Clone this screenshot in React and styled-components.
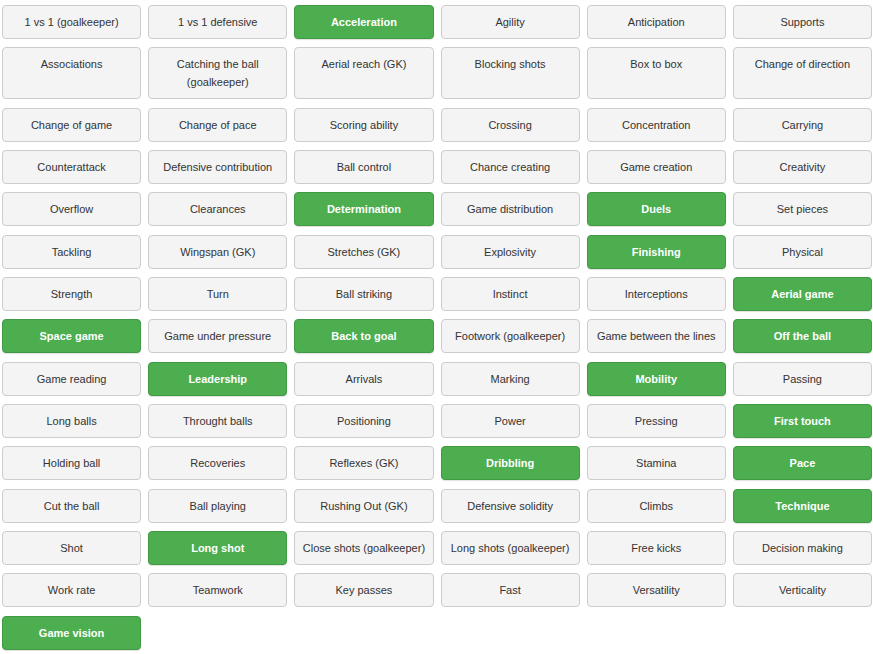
import styled, { createGlobalStyle } from "styled-components";

const GlobalStyle = createGlobalStyle`
  body {
    margin: 0;
    background: #fff;
    font-family: "Liberation Sans", Arial, sans-serif;
  }
`;

const Grid = styled.div`
  display: grid;
  grid-template-columns: repeat(6, 1fr);
  column-gap: 7px;
  row-gap: 8.33px;
  padding: 5px 1px 4px 2px;
  align-items: stretch;
`;

const Tag = styled.button`
  font-family: "Liberation Sans", Arial, sans-serif;
  font-size: 11px;
  line-height: 18px;
  padding: 7px 6px;
  border-radius: 4px;
  text-align: center;
  display: flex;
  justify-content: center;
  align-items: flex-start;
  cursor: pointer;
  border: 1px solid ${({ active }) => (active ? "#3f9a42" : "#cccccc")};
  background: ${({ active }) => (active ? "#4cae4f" : "#f4f4f4")};
  color: ${({ active }) => (active ? "#ffffff" : "#333333")};
  font-weight: ${({ active }) => (active ? "bold" : "normal")};
  box-shadow: ${({ active }) =>
    active ? "0 1px 1px rgba(0,0,0,0.12)" : "none"};
`;

const skills = [
  ["1 vs 1 (goalkeeper)"], ["1 vs 1 defensive"], ["Acceleration", 1], ["Agility"], ["Anticipation"], ["Supports"],
  ["Associations"], ["Catching the ball (goalkeeper)"], ["Aerial reach (GK)"], ["Blocking shots"], ["Box to box"], ["Change of direction"],
  ["Change of game"], ["Change of pace"], ["Scoring ability"], ["Crossing"], ["Concentration"], ["Carrying"],
  ["Counterattack"], ["Defensive contribution"], ["Ball control"], ["Chance creating"], ["Game creation"], ["Creativity"],
  ["Overflow"], ["Clearances"], ["Determination", 1], ["Game distribution"], ["Duels", 1], ["Set pieces"],
  ["Tackling"], ["Wingspan (GK)"], ["Stretches (GK)"], ["Explosivity"], ["Finishing", 1], ["Physical"],
  ["Strength"], ["Turn"], ["Ball striking"], ["Instinct"], ["Interceptions"], ["Aerial game", 1],
  ["Space game", 1], ["Game under pressure"], ["Back to goal", 1], ["Footwork (goalkeeper)"], ["Game between the lines"], ["Off the ball", 1],
  ["Game reading"], ["Leadership", 1], ["Arrivals"], ["Marking"], ["Mobility", 1], ["Passing"],
  ["Long balls"], ["Throught balls"], ["Positioning"], ["Power"], ["Pressing"], ["First touch", 1],
  ["Holding ball"], ["Recoveries"], ["Reflexes (GK)"], ["Dribbling", 1], ["Stamina"], ["Pace", 1],
  ["Cut the ball"], ["Ball playing"], ["Rushing Out (GK)"], ["Defensive solidity"], ["Climbs"], ["Technique", 1],
  ["Shot"], ["Long shot", 1], ["Close shots (goalkeeper)"], ["Long shots (goalkeeper)"], ["Free kicks"], ["Decision making"],
  ["Work rate"], ["Teamwork"], ["Key passes"], ["Fast"], ["Versatility"], ["Verticality"],
  ["Game vision", 1],
];

export default function App() {
  return (
    <>
      <GlobalStyle />
      <Grid>
        {skills.map(([label, active]) => (
          <Tag key={label} active={active ? 1 : 0}>
            {label}
          </Tag>
        ))}
      </Grid>
    </>
  );
}
